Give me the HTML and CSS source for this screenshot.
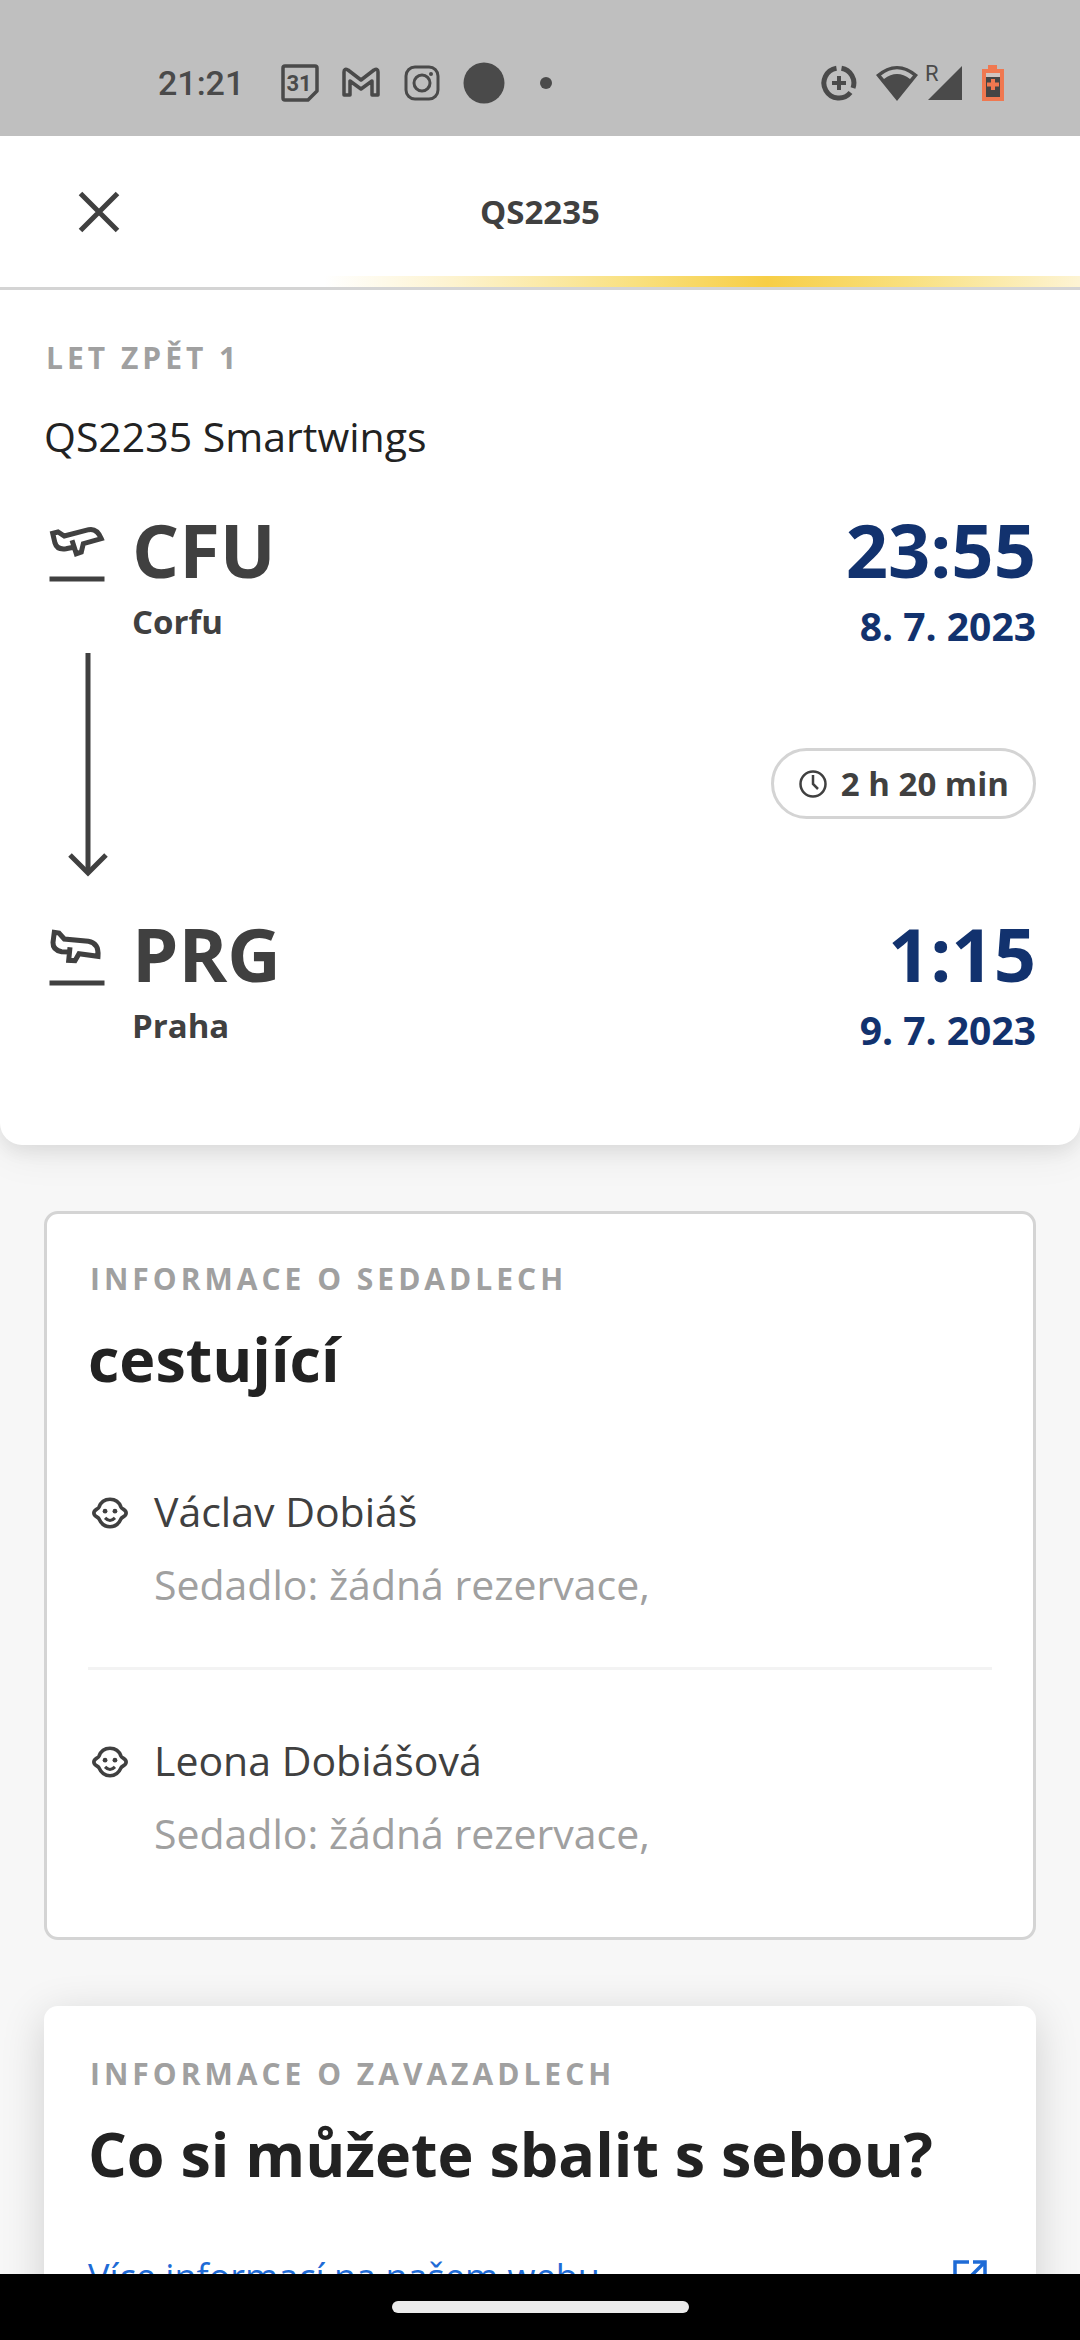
FILE: index.html
```html
<!DOCTYPE html>
<html lang="cs">
<head>
<meta charset="utf-8">
<meta name="viewport" content="width=device-width, initial-scale=1">
<title>QS2235</title>
<link rel="stylesheet" href="styles.css">
</head>
<body>
<div class="status">
  <span class="clock">21:21</span>
  <div class="notifications">
    <svg width="40" height="40" viewBox="0 0 40 40" fill="none" stroke="currentColor" stroke-width="3.5" stroke-linejoin="round"><path d="M5 3H35Q37 3 37 5V28L28 37H5Q3 37 3 35V5Q3 3 5 3Z"/><text class="day" x="19" y="28" text-anchor="middle">31</text></svg>
    <svg width="40" height="40" viewBox="0 0 40 40" fill="none" stroke="currentColor" stroke-width="3.5" stroke-linejoin="round"><path d="M3 9Q3 5 7 7L20 17L33 7Q37 5 37 9V32H31V18L20 26L9 18V32H3Z"/></svg>
    <svg width="40" height="40" viewBox="0 0 40 40" fill="none" stroke="currentColor" stroke-width="3"><rect x="4" y="4" width="32" height="32" rx="9"/><circle cx="20" cy="20" r="8"/><circle cx="29" cy="11" r="2" fill="currentColor" stroke="none"/></svg>
    <svg width="42" height="42" viewBox="0 0 42 42" fill="currentColor"><circle cx="21" cy="21" r="20.5"/></svg>
    <svg width="40" height="40" viewBox="0 0 40 40" fill="currentColor"><circle cx="20" cy="20" r="6"/></svg>
  </div>
  <div class="system">
    <svg width="36" height="36" viewBox="0 0 36 36" fill="none" stroke="currentColor" stroke-width="5"><path d="M20.500 3.200A15 15 0 0 1 32 23"/><path d="M29.500 27.500A15 15 0 1 1 15.500 3.200"/><path d="M18 11V25M11 18H25" stroke-width="4"/></svg>
    <svg width="42" height="36" viewBox="0 0 42 36" fill="currentColor"><path fill-rule="evenodd" d="M0 10Q21 -8 42 10L21 36ZM5 10.500L8 14Q21 4 34 14L37 10.500Q21 -2 5 10.500Z"/></svg>
    <svg class="signal" width="38" height="40" viewBox="0 0 38 40" fill="currentColor"><text class="roaming" x="0" y="18">R</text><path d="M3 37L37 3V37Z"/></svg>
    <svg width="22" height="36" viewBox="0 0 22 36"><path fill="#f07850" d="M6 0H15V4H22V36H0V4H6Z"/><path fill="#d0c4c0" d="M4 8H18V12H4Z"/><path fill="#454545" d="M4 12H18V32H4Z"/><path fill="none" stroke="#f07850" stroke-width="4" d="M11 14V25M5 19.500H17"/></svg>
  </div>
</div>

<header class="topbar">
  <button class="close" type="button" aria-label="Zavřít"><svg width="66" height="66" viewBox="0 0 66 66" fill="none" stroke="currentColor" stroke-width="5"><path d="M14.500 14.500L51.500 51.500M51.500 14.500L14.500 51.500"/></svg></button>
  <h1 class="title">QS2235</h1>
  <div class="progress" role="progressbar" aria-label="Načítání"></div>
</header>

<main class="content">
  <section class="flight">
    <p class="label">LET ZPĚT 1</p>
    <p class="airline">QS2235 Smartwings</p>
    <div class="leg">
      <svg class="leg-icon" width="66" height="66" viewBox="0 0 66 66" fill="none" stroke="currentColor" stroke-width="5"><path d="M29.300 23.300L22 24.700Q13 26 11 19L8.700 9.300L14 8L20.300 12L44.700 5.700Q53 4 57.300 14.700L39.300 19.700L37.300 28L32.300 29.700L28 16.300"/><path d="M5.500 55H60.500"/></svg>
      <div class="place"><h2 class="big">CFU</h2><p class="city">Corfu</p></div>
      <div class="when"><p class="big">23:55</p><p class="date">8. 7. 2023</p></div>
    </div>
    <div class="route">
      <svg width="88" height="226" viewBox="0 0 88 226" fill="none" stroke="currentColor" stroke-width="5"><path d="M44 1V221"/><path d="M26 203L44 221L62 203"/></svg>
      <span class="duration"><svg width="30" height="30" viewBox="0 0 30 30" fill="none" stroke="currentColor" stroke-width="2.500"><circle cx="15" cy="15" r="12.500"/><path d="M15 6V15L20 20"/></svg>2 h 20 min</span>
    </div>
    <div class="leg">
      <svg class="leg-icon" width="66" height="66" viewBox="0 0 66 66" fill="none" stroke="currentColor" stroke-width="5"><path d="M25.300 24L17.700 23.700Q8.700 22 9 14.500L10.300 4.300L15 5L20.300 11L44.300 13.300Q55 15 54 28.300L35 25.700L31 32.700L24.700 32.300L26 19.300"/><path d="M5.500 55H60.500"/></svg>
      <div class="place"><h2 class="big">PRG</h2><p class="city">Praha</p></div>
      <div class="when"><p class="big">1:15</p><p class="date">9. 7. 2023</p></div>
    </div>
  </section>

  <section class="card card-outlined">
    <p class="label">INFORMACE O SEDADLECH</p>
    <h2 class="heading">cestující</h2>
    <ul class="passengers">
      <li class="passenger">
        <svg width="44" height="44" viewBox="0 0 24 24" fill="none" stroke="currentColor" stroke-width="2"><path d="M12 4.500C14.800 4.500 17 6 18 8.800C18.500 10 20.800 10 20.800 12S18.600 14 18 15.200C16.800 18 14.800 19.500 12 19.500S7.200 18 6 15.200C5.400 14 3.200 14 3.200 12S5.500 10 6 8.800C7 6 9.200 4.500 12 4.500Z"/><circle cx="9.300" cy="11" r="1.300" fill="currentColor" stroke="none"/><circle cx="14.700" cy="11" r="1.300" fill="currentColor" stroke="none"/><path d="M9.300 14.700Q12 17.500 14.700 14.700" stroke-width="1.700"/></svg>
        <div><p class="name">Václav Dobiáš</p><p class="seat">Sedadlo: žádná rezervace,</p></div>
      </li>
      <li class="passenger">
        <svg width="44" height="44" viewBox="0 0 24 24" fill="none" stroke="currentColor" stroke-width="2"><path d="M12 4.500C14.800 4.500 17 6 18 8.800C18.500 10 20.800 10 20.800 12S18.600 14 18 15.200C16.800 18 14.800 19.500 12 19.500S7.200 18 6 15.200C5.400 14 3.200 14 3.200 12S5.500 10 6 8.800C7 6 9.200 4.500 12 4.500Z"/><circle cx="9.300" cy="11" r="1.300" fill="currentColor" stroke="none"/><circle cx="14.700" cy="11" r="1.300" fill="currentColor" stroke="none"/><path d="M9.300 14.700Q12 17.500 14.700 14.700" stroke-width="1.700"/></svg>
        <div><p class="name">Leona Dobiášová</p><p class="seat">Sedadlo: žádná rezervace,</p></div>
      </li>
    </ul>
  </section>

  <section class="card card-raised">
    <p class="label">INFORMACE O ZAVAZADLECH</p>
    <h2 class="heading">Co si můžete sbalit s sebou?</h2>
    <a class="more" href="#zavazadla">Více informací na našem webu<svg width="44" height="44" viewBox="0 0 44 44" fill="none" stroke="currentColor" stroke-width="3.500"><path d="M21 7H7V37H37V23"/><path d="M25 7H37V19M37 7L15 29"/></svg></a>
  </section>
</main>

<div class="gesture"><span class="handle"></span></div>
</body>
</html>
```
FILE: styles.css
```css
* { box-sizing: border-box; }

body {
  margin: 0;
  height: 100vh;
  display: flex;
  flex-direction: column;
  background: #f7f7f7;
  color: #404040;
  font-family: "Open Sans", "Noto Sans", sans-serif;
  font-size: 41px;
  line-height: 56px;
}

h1, h2, p, ul { margin: 0; padding: 0; }
svg { display: block; flex: none; }

/* System status bar */
.status {
  flex: none;
  height: 136px;
  padding: 30px 76px 0 158px;
  display: flex;
  align-items: center;
  background: #bfbfbf;
  color: #4a4a4a;
}
.clock { flex: 0 0 122px; font: 500 34px/44px Roboto, sans-serif; }
.notifications { display: flex; align-items: center; gap: 21px; }
.system { display: flex; align-items: center; gap: 19px; margin-left: auto; }
.signal { margin-left: -12px; overflow: visible; }
.day { font: 700 22px Roboto, sans-serif; fill: currentColor; stroke: none; }
.roaming { font: 400 22px Roboto, sans-serif; }

/* App bar */
.topbar {
  flex: none;
  display: grid;
  grid-template-columns: 66px 1fr 66px;
  align-items: center;
  height: 154px;
  padding: 0 66px;
  position: relative;
  background: #fff;
  border-bottom: 3px solid #d4d4d4;
}
.close {
  width: 66px;
  height: 66px;
  padding: 0;
  border: 0;
  background: none;
  color: inherit;
}
.title { font-size: 33px; line-height: 44px; text-align: center; }
.progress {
  position: absolute;
  left: 0;
  right: 0;
  bottom: 0;
  height: 11px;
  background: linear-gradient(90deg, #fff 30%, #fdf3cf 42%, #f9e07e 59%, #f7ce46 71%, #f9e07e 84%, #fdf4d4 100%);
}

.content { flex: 1; min-height: 0; overflow-y: auto; scrollbar-width: none; }

.label {
  padding-left: 2px;
  color: #a0a0a0;
  font-size: 30px;
  line-height: 44px;
  font-weight: 700;
  letter-spacing: 4px;
}

/* Flight summary */
.flight {
  padding: 46px 44px 89px;
  background: #fff;
  border-radius: 0 0 22px 22px;
  box-shadow: 0 8px 16px rgba(0, 0, 0, .06), 0 6px 44px rgba(0, 0, 0, .08);
}
.airline { margin: 28px 0 42px; color: #222; }
.leg { display: flex; }
.leg-icon { margin: 18px 22px 0 0; }
.big { font-size: 74px; line-height: 88px; font-weight: 700; }
.city { margin-top: 6px; font-size: 33px; line-height: 44px; font-weight: 700; }
.when { margin-left: auto; text-align: right; color: #12326e; font-weight: 700; }
.date { margin-top: 6px; font-size: 39px; line-height: 52px; }
.route { display: flex; justify-content: space-between; align-items: flex-start; }
.duration {
  display: flex;
  align-items: center;
  gap: 13px;
  margin: 96px 0 91px;
  padding: 11px 24px;
  border: 3px solid #d4d4d4;
  border-radius: 36px;
  font-size: 33px;
  line-height: 43px;
  font-weight: 700;
}

/* Information cards */
.card { margin: 66px 44px 0; background: #fff; border-radius: 14px; }
.card-outlined { padding: 43px 41px 21px; border: 3px solid #d4d4d4; }
.card-raised { padding: 46px 44px; box-shadow: 0 10px 44px rgba(0, 0, 0, .16); }
.heading { margin-top: 18px; color: #222; font-size: 61px; line-height: 80px; font-weight: 700; }

.passengers { margin-top: 22px; list-style: none; }
.passenger { display: flex; gap: 22px; padding: 62px 0 55px; }
.passenger + .passenger { border-top: 3px solid #f3f3f3; }
.passenger svg { margin-top: 8px; }
.seat { margin-top: 17px; color: #a0a0a0; }

.more {
  display: flex;
  justify-content: space-between;
  align-items: center;
  margin-top: 55px;
  color: #1e6bd6;
  font-size: 36px;
  text-decoration: none;
}

/* System gesture bar */
.gesture {
  flex: none;
  height: 66px;
  display: flex;
  justify-content: center;
  align-items: center;
  background: #000;
}
.handle { width: 297px; height: 12px; border-radius: 6px; background: #ebebeb; }
```
